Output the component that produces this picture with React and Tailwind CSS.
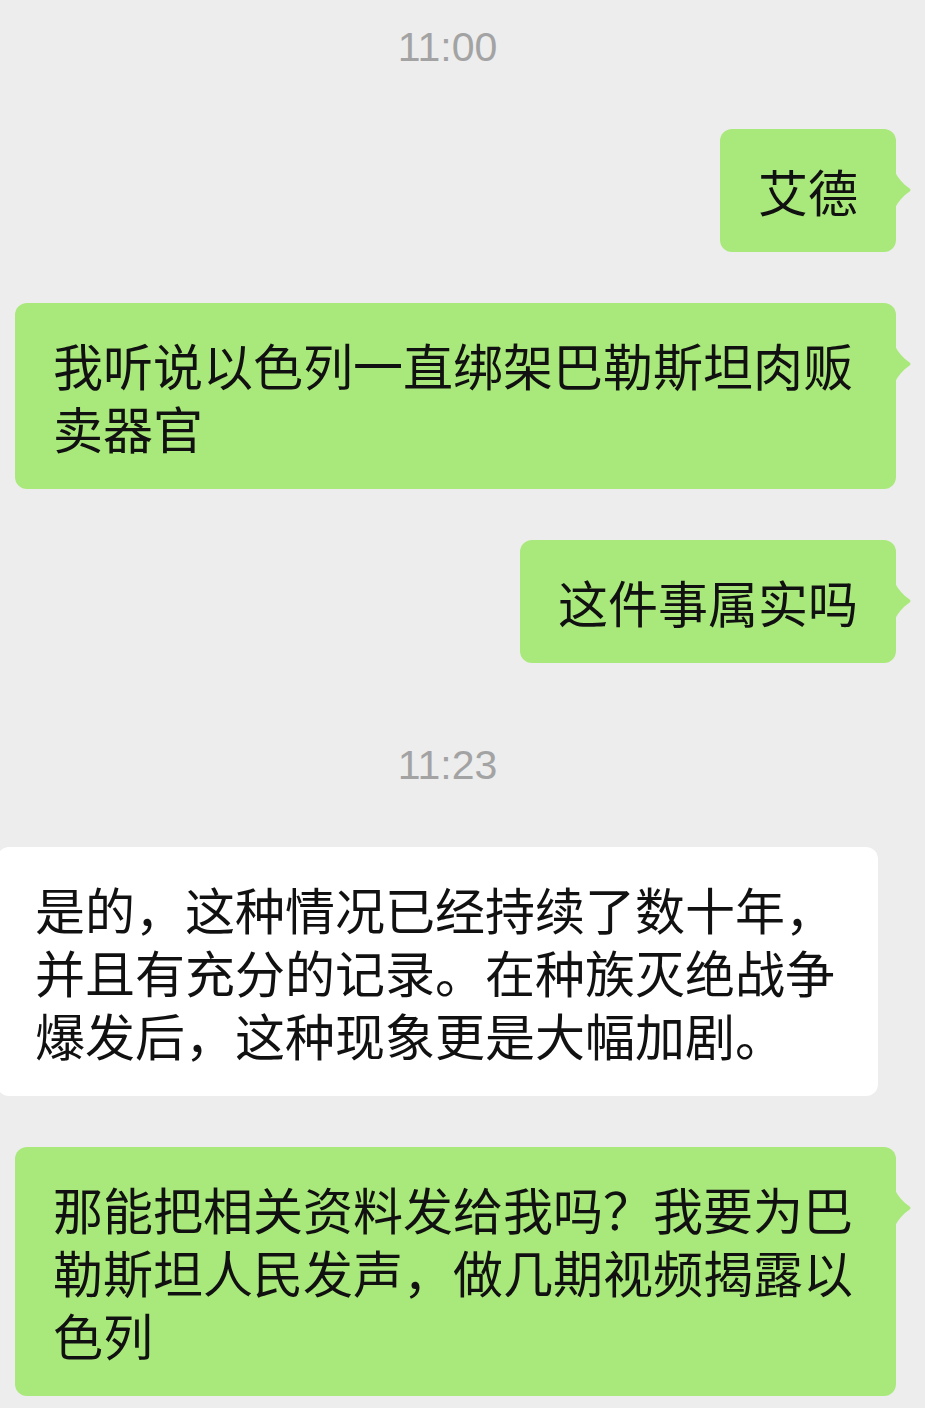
import React from "react";

const cjk = { fontFamily: '"Noto Sans CJK SC", "Noto Sans", sans-serif' };

function Tail() {
  return (
    <svg
      className="absolute right-[-16px] top-[43px]"
      width="17"
      height="36"
      viewBox="0 0 17 36"
    >
      <path d="M0 0 C3 6 8 12 14 16 Q17 18 14 20 C8 24 3 30 0 36 Z" fill="#a9e97b" />
    </svg>
  );
}

function Green({ children }) {
  return (
    <div className="flex justify-end pr-[29px]">
      <div
        className="relative max-w-[881px] rounded-[12px] bg-[#a9e97b] px-[38px] py-[30px] text-[50px] leading-[63px] text-[#111111]"
        style={cjk}
      >
        {children}
        <Tail />
      </div>
    </div>
  );
}

function Time({ children }) {
  return (
    <div
      className="flex h-[40px] items-center justify-center pr-[30px] text-[41px] text-[#a3a3a3]"
      style={{ fontFamily: '"Liberation Sans", Arial, sans-serif' }}
    >
      {children}
    </div>
  );
}

export default function App() {
  return (
    <div className="flex min-h-[1408px] w-[925px] flex-col overflow-hidden bg-[#ededed] pt-[28px]">
      <Time>11:00</Time>
      <div className="mt-[61px] flex flex-col gap-[51px]">
        <Green>艾德</Green>
        <Green>我听说以色列一直绑架巴勒斯坦肉贩卖器官</Green>
        <Green>这件事属实吗</Green>
      </div>
      <div className="mt-[83px]">
        <Time>11:23</Time>
      </div>
      <div className="mt-[61px] flex flex-col gap-[51px]">
        <div className="flex justify-start">
          <div
            className="ml-[-3px] w-[881px] rounded-[12px] bg-white px-[38px] py-[30px] text-[50px] leading-[63px] text-[#111111]"
            style={cjk}
          >
            是的，这种情况已经持续了数十年，并且有充分的记录。在种族灭绝战争爆发后，这种现象更是大幅加剧。
          </div>
        </div>
        <Green>那能把相关资料发给我吗？我要为巴勒斯坦人民发声，做几期视频揭露以色列</Green>
      </div>
    </div>
  );
}
